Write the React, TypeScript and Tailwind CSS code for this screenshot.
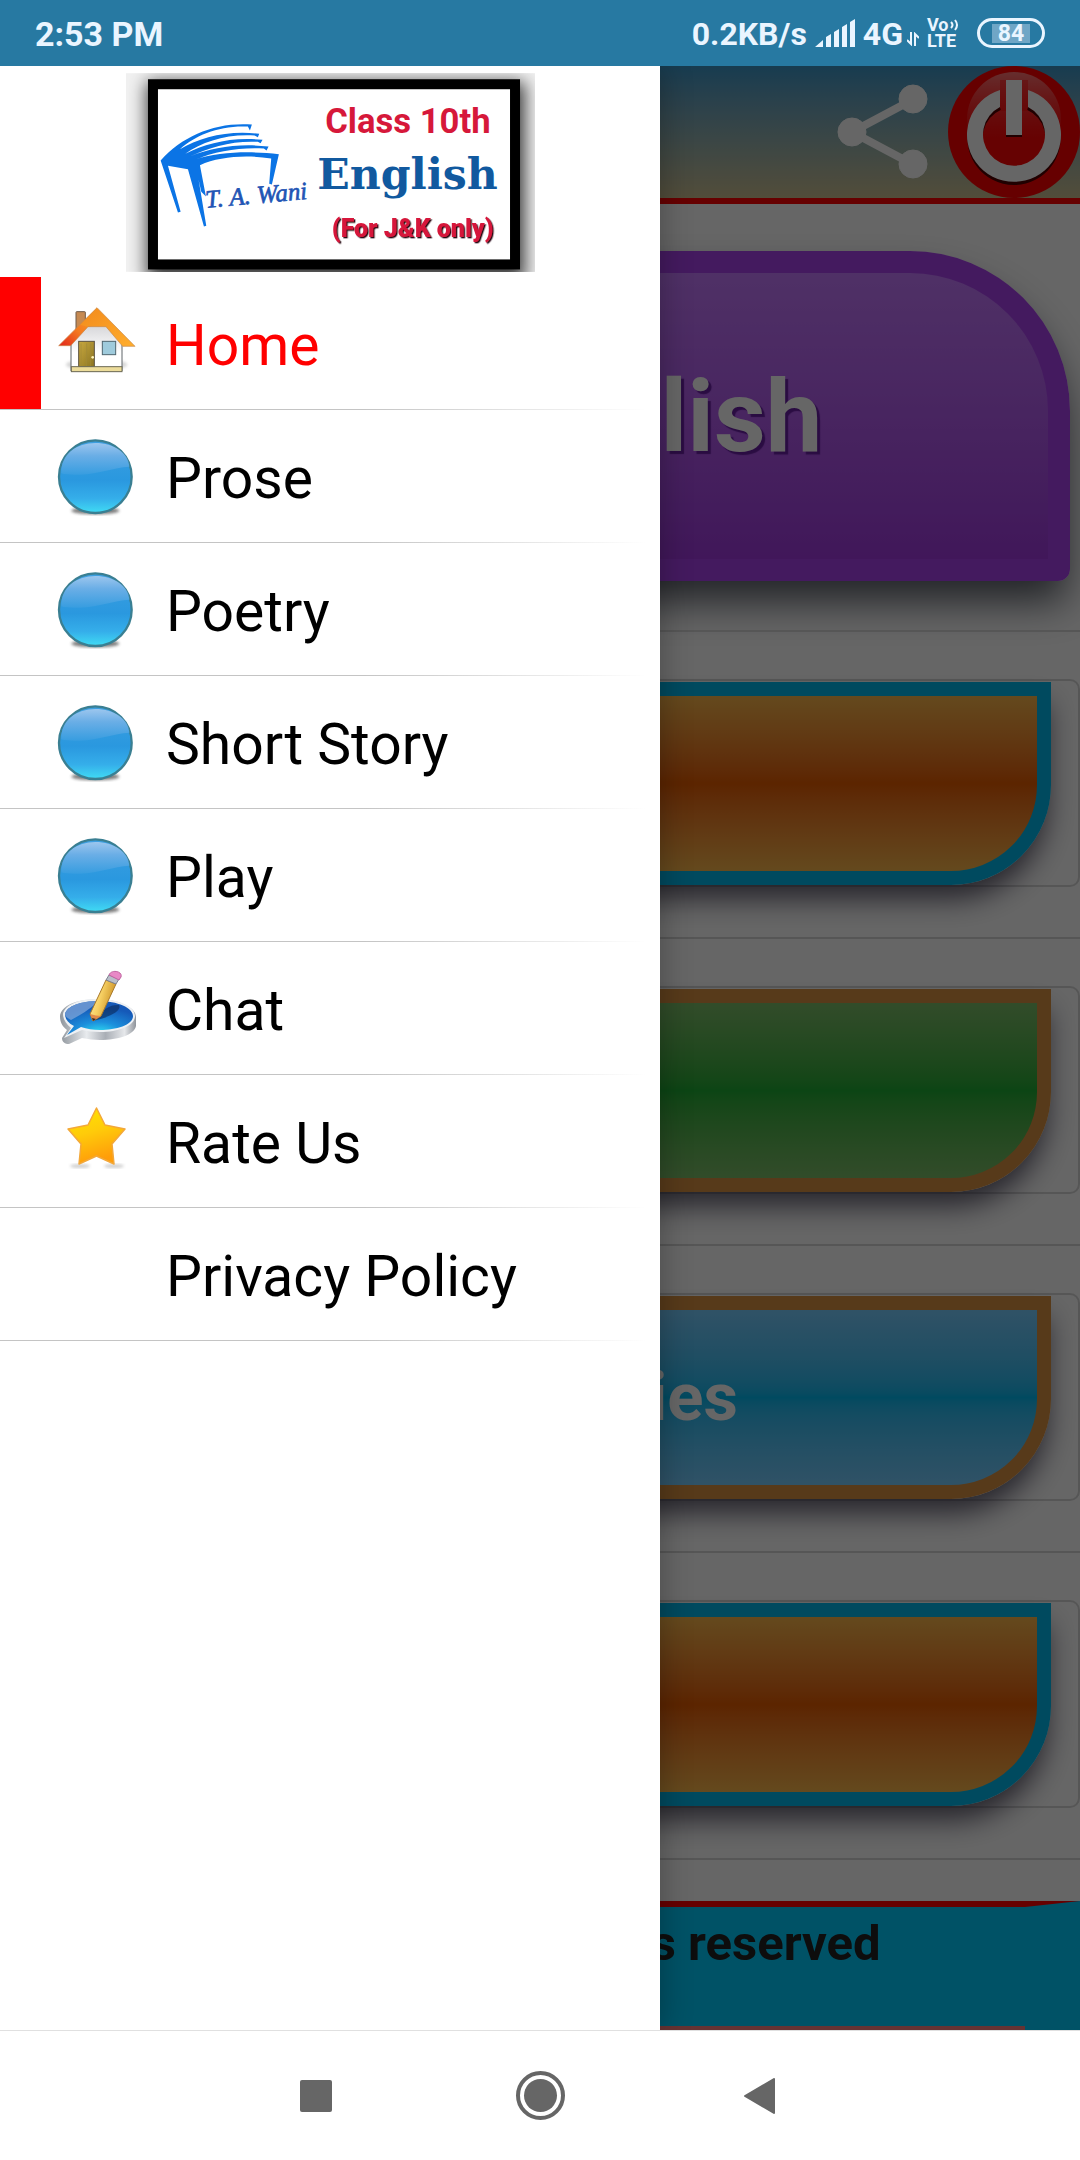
import type { ReactNode } from "react";

function HouseIcon() {
  return (
    <svg viewBox="168 99 240 240" className="size-20 shrink-0" aria-hidden="true">
      <defs>
        <linearGradient id="roof" x1="0" y1="1" x2="1" y2="0">
          <stop offset="0" stopColor="#e2231a" />
          <stop offset="0.45" stopColor="#f47b20" />
          <stop offset="1" stopColor="#fba52a" />
        </linearGradient>
        <linearGradient id="roofRight" x1="0" y1="0" x2="1" y2="1">
          <stop offset="0" stopColor="#f28a1c" />
          <stop offset="1" stopColor="#ffae2e" />
        </linearGradient>
        <linearGradient id="wall" x1="0" y1="0" x2="0" y2="1">
          <stop offset="0" stopColor="#d5d5d8" />
          <stop offset="0.6" stopColor="#ffffff" />
        </linearGradient>
        <linearGradient id="door" x1="0" y1="0" x2="1" y2="1">
          <stop offset="0" stopColor="#c9a93f" />
          <stop offset="1" stopColor="#8b7422" />
        </linearGradient>
        <filter id="houseBlur">
          <feGaussianBlur stdDeviation="5" />
        </filter>
      </defs>
      <ellipse cx="290" cy="284" rx="92" ry="18" fill="#9a9a9a" opacity="0.4" filter="url(#houseBlur)" />
      <rect x="228" y="125" width="28" height="60" rx="2" fill="#c68a52" stroke="#6f5a48" strokeWidth="3" />
      <path d="M213 200 L262 164 H318 L366 212 V303 H213Z" fill="url(#wall)" stroke="#5f6468" strokeWidth="3" />
      <path d="M291 113 L176 227 H212 L264 170 L291 166Z" fill="url(#roof)" />
      <path d="M291 113 L405 229 H368 L318 170 H264 L240 164Z" fill="url(#roofRight)" />
      <path d="M291 113 L176 227 H212 L264 170 H318 L368 229 H405Z" fill="none" stroke="#c98a4a" strokeWidth="2" />
      <rect x="236" y="214" width="47" height="77" fill="url(#door)" stroke="#5a5140" strokeWidth="3" />
      <path d="M243 220 V288 M260 220 V288 M272 220 V288" stroke="#a08a38" strokeWidth="2" />
      <circle cx="278" cy="262" r="4" fill="#fff3b8" />
      <rect x="307" y="214" width="40" height="40" fill="#9fcbdc" stroke="#4f6670" strokeWidth="3" />
      <rect x="214" y="290" width="152" height="15" fill="#ecdc9a" stroke="#6c6a55" strokeWidth="3" />
    </svg>
  );
}

function BallIcon() {
  return (
    <svg viewBox="168 498 240 240" className="size-20 shrink-0" aria-hidden="true">
      <defs>
        <linearGradient id="ball" x1="0" y1="0" x2="0" y2="1">
          <stop offset="0" stopColor="#3d9fe0" />
          <stop offset="0.55" stopColor="#2a98df" />
          <stop offset="0.8" stopColor="#35aeea" />
          <stop offset="1" stopColor="#40dcf4" />
        </linearGradient>
        <linearGradient id="gloss" x1="0" y1="0" x2="0" y2="1">
          <stop offset="0" stopColor="#9cc6ee" />
          <stop offset="0.4" stopColor="#6aaee6" />
          <stop offset="1" stopColor="#379de0" />
        </linearGradient>
        <filter id="ballBlur">
          <feGaussianBlur stdDeviation="4" />
        </filter>
      </defs>
      <ellipse cx="286" cy="722" rx="72" ry="11" fill="#444" opacity="0.7" filter="url(#ballBlur)" />
      <circle cx="286" cy="620" r="109" fill="url(#ball)" stroke="#3a7f92" strokeWidth="7" />
      <path
        d="M184 610 C182 552 230 519 286 519 C342 519 386 550 388 590 C340 592 300 612 240 614 C216 615 196 614 184 610Z"
        fill="url(#gloss)"
      />
    </svg>
  );
}

function ChatIcon() {
  return (
    <svg viewBox="0 0 80 80" className="size-20 shrink-0" aria-hidden="true">
      <defs>
        <radialGradient id="pool" cx="0.5" cy="0.95" r="0.75">
          <stop offset="0" stopColor="#2fe0f2" />
          <stop offset="0.45" stopColor="#1c8fdc" />
          <stop offset="1" stopColor="#1559b8" />
        </radialGradient>
        <linearGradient id="rim" x1="0" y1="0" x2="1" y2="0">
          <stop offset="0" stopColor="#8f959c" />
          <stop offset="0.35" stopColor="#e8ebee" />
          <stop offset="0.6" stopColor="#a9aeb5" />
          <stop offset="0.85" stopColor="#e6e8eb" />
          <stop offset="1" stopColor="#8f949b" />
        </linearGradient>
        <linearGradient id="pencil" x1="0" y1="0" x2="1" y2="0.4">
          <stop offset="0" stopColor="#fff0a8" />
          <stop offset="0.5" stopColor="#f6cf62" />
          <stop offset="1" stopColor="#c98e22" />
        </linearGradient>
      </defs>
      <path
        d="M4 48 C5 38 20 31 41 31 C62 31 80 39 80 49 V58 C78 67 62 72 44 72 C38 72 32 71 26 70 L13 76 C9 76 6 74 6 70 L11 62 C6 58 4 54 4 48Z"
        fill="url(#rim)"
      />
      <path
        d="M7 46 C9 37 22 31 42 31 C64 31 79 39 79 48 C79 58 62 64 44 64 C37 64 31 63 26 62 L8 70 L15 60 C10 56 7 51 7 46Z"
        fill="#eef1f4"
      />
      <path
        d="M9 46 C11 38 25 33 42 33 C62 33 77 40 77 48 C77 57 60 62 44 62 C37 62 31 61 25 59 L11 67 L18 58 C12 55 9 51 9 46Z"
        fill="url(#pool)"
      />
      <path d="M9 46 C11 38 25 33 42 33 C36 40 26 46 15 52 C11 50 9 48 9 46Z" fill="#7fa5d8" opacity="0.75" />
      <path d="M36 53 C46 42 54 36 63 37 C66 42 56 49 36 53Z" fill="#0a2c60" opacity="0.65" />
      <path d="M34 46 L50 12 L60 16 L45 48 L37 53Z" fill="url(#pencil)" stroke="#a9792a" strokeWidth="1" />
      <path d="M34 46 L37 53 L45 48 C42 48 38 47 34 46Z" fill="#e08a4a" />
      <path d="M36 50 L37 53 L40 51Z" fill="#3a2a20" />
      <path d="M50 12 L53 7 L63 11 L60 16Z" fill="#b9bec8" stroke="#7c8190" strokeWidth="1" />
      <path d="M53 7 C55 1 67 3 65 9 L63 12Z" fill="#e889c6" stroke="#c064a0" strokeWidth="1" />
    </svg>
  );
}

function StarIcon() {
  return (
    <svg viewBox="0 0 80 80" className="size-20 shrink-0" aria-hidden="true">
      <defs>
        <linearGradient id="star" x1="0" y1="0" x2="0.3" y2="1">
          <stop offset="0" stopColor="#ffe600" />
          <stop offset="0.5" stopColor="#ffcb0a" />
          <stop offset="1" stopColor="#ff9d0a" />
        </linearGradient>
        <filter id="starBlur">
          <feGaussianBlur stdDeviation="1.6" />
        </filter>
      </defs>
      <ellipse cx="24" cy="65" rx="10" ry="2" fill="#888" opacity="0.4" filter="url(#starBlur)" />
      <ellipse cx="58" cy="65" rx="10" ry="2" fill="#888" opacity="0.4" filter="url(#starBlur)" />
      <path
        d="M40.500 7 L49 24 L69 28 L56 43 L58 63 L40.500 55 L23 63 L25 43 L12 28 L32 24Z"
        fill="url(#star)"
        stroke="#f3a83a"
        strokeWidth="1.500"
        strokeLinejoin="round"
      />
    </svg>
  );
}

function Logo() {
  return (
    <svg viewBox="50 40 1228 596" className="h-[199px] w-[409px]" role="img" aria-label="Class 10th English logo">
      <defs>
        <filter id="frameBlur" x="-0.1" y="-0.2" width="1.2" height="1.4">
          <feGaussianBlur stdDeviation="26" />
        </filter>
        <filter id="textShade">
          <feDropShadow dx="4" dy="4" stdDeviation="1" floodColor="#2a0a18" />
        </filter>
      </defs>
      <rect x="50" y="40" width="1228" height="596" fill="#f0f0f0" />
      <rect x="112" y="66" width="1136" height="600" fill="#000" opacity="0.75" filter="url(#frameBlur)" />
      <rect x="116" y="58" width="1117" height="571" fill="#000" />
      <rect x="146" y="88" width="1057" height="511" fill="#fff" />
      <path
        d="M154 302 C222 226 320 186 428 194 L422 212 L416 200 C330 196 258 226 212 268 C272 232 360 210 450 222 L446 232 L436 227 C350 222 280 246 228 282 C290 250 370 230 460 240 L454 250 L446 246 C370 242 300 262 242 290 C310 262 390 250 478 260 L472 272 L464 266 C390 262 320 274 256 300 C330 274 430 274 509 283 L488 374 L480 372 L486 296 C410 284 330 290 272 316 L290 410 L276 396 L268 360 L291 498 L284 500 L236 328 L176 318 L214 456 L206 458Z"
        fill="#0b74e5"
      />
      <text
        x="290"
        y="444"
        fontFamily="'Liberation Serif', serif"
        fontSize="75"
        fontStyle="italic"
        fill="#1f55b5"
        stroke="#1f55b5"
        strokeWidth="2"
        transform="rotate(-5 290 444)"
      >
        T. A. Wani
      </text>
      <text x="648" y="218" fontFamily="Roboto, sans-serif" fontSize="104" fontWeight="700" fill="#d6183a">
        Class 10th
      </text>
      <text x="624" y="388" fontFamily="'DejaVu Serif', serif" fontSize="128" fontWeight="700" fill="#11599f">
        English
      </text>
      <text
        x="668"
        y="533"
        fontFamily="Roboto, sans-serif"
        fontSize="75"
        fontWeight="900"
        fill="#d6183a"
        filter="url(#textShade)"
      >
        (For J&amp;K only)
      </text>
    </svg>
  );
}

const menu: { label: string; icon?: ReactNode; active?: boolean }[] = [
  { label: "Home", icon: <HouseIcon />, active: true },
  { label: "Prose", icon: <BallIcon /> },
  { label: "Poetry", icon: <BallIcon /> },
  { label: "Short Story", icon: <BallIcon /> },
  { label: "Play", icon: <BallIcon /> },
  { label: "Chat", icon: <ChatIcon /> },
  { label: "Rate Us", icon: <StarIcon /> },
  { label: "Privacy Policy" },
];

const cards = [
  { label: "Prose", style: "border-[#00b9ee] from-[#fab74b] via-[#e65c00] to-[#fab74b]" },
  { label: "Poetry", style: "border-[#da9141] from-[#7dbe69] via-[#1eac34] to-[#7dbe69]" },
  { label: "Short Stories", style: "border-[#da9141] from-[#78cdff] via-[#00b9f0] to-[#78cdff]" },
  { label: "Play", style: "border-[#00b9ee] from-[#fab74b] via-[#e65c00] to-[#fab74b]" },
];

function StatusBar() {
  return (
    <div className="flex h-[66px] items-center bg-[#2779a2] px-[35px] text-[#eaf5ff]">
      <span className="pt-0.5 text-[34px] leading-none font-bold">2:53 PM</span>
      <div className="ml-auto flex items-center">
        <span className="pt-0.5 text-[32px] leading-none font-bold">0.2KB/s</span>
        <svg viewBox="0 0 40 30" className="ml-2 h-[30px] w-10" fill="currentColor" aria-label="Signal">
          <path d="M0 29 L8 22 V29Z M11 19 L16 16 V29 H11Z M19 14 L24 11 V29 H19Z M27 9 L32 6 V29 H27Z M35 4 L40 1 V29 H35Z" />
        </svg>
        <span className="ml-2 pt-0.5 text-[32px] leading-none font-bold">4G</span>
        <svg viewBox="0 0 12 14" className="mt-3 ml-1 h-[14px] w-3" fill="none" stroke="currentColor" strokeWidth="2" aria-label="Data">
          <path d="M4 0 V12 L0 8 M8 14 V2 L12 6" />
        </svg>
        <div className="ml-2 flex w-[35px] flex-col text-[18px] leading-4 font-bold">
          <span className="flex items-center">
            Vo
            <svg viewBox="0 0 10 14" className="h-[14px] w-[10px]" fill="none" stroke="currentColor" strokeWidth="2" aria-hidden="true">
              <path d="M2 4 Q5 7 2 10 M6 2 Q10 7 6 12" />
            </svg>
          </span>
          <span>LTE</span>
        </div>
        <div className="ml-[15px] flex h-[30px] w-[68px] items-center justify-center rounded-full border-3 border-[#eaf5ff] px-3">
          <span className="w-full bg-[#6fa6c6] text-center text-[23px] leading-[19px] font-bold">84</span>
        </div>
      </div>
    </div>
  );
}

function Header() {
  return (
    <header className="flex h-[138px] items-center justify-end border-b-6 border-[#ff0000] bg-linear-to-b from-[#3a96c8] to-[#cdc091]">
      <button type="button" aria-label="Share" className="mr-[18px]">
        <svg viewBox="0 0 96 96" className="size-24" fill="#ffffff" stroke="#ffffff">
          <path d="M80 15 L18 48 L80 81" fill="none" strokeWidth="8" />
          <circle cx="18" cy="48" r="14" />
          <circle cx="79" cy="15" r="14" />
          <circle cx="79" cy="80" r="14" />
        </svg>
      </button>
      <button type="button" aria-label="Exit">
        <svg viewBox="0 0 132 132" className="size-[132px]">
          <defs>
            <linearGradient id="shine" x1="0" y1="0" x2="0" y2="1">
              <stop offset="0" stopColor="#ff9c9c" stopOpacity="0.75" />
              <stop offset="0.7" stopColor="#ff4040" stopOpacity="0.1" />
            </linearGradient>
          </defs>
          <circle cx="66" cy="66" r="66" fill="#ff0000" />
          <circle cx="66" cy="53" r="47" fill="url(#shine)" />
          <path d="M50 31 A39 39 0 1 0 82 31" transform="translate(0 6)" fill="none" stroke="#500000" strokeWidth="15" />
          <path d="M66 14 H52 V45 H80 V14Z" fill="#ff0000" opacity="0.4" />
          <path d="M52 24 A47 47 0 1 0 80 24 V41 A31 31 0 1 1 52 41Z" fill="#fff" />
          <path d="M58 69 H74 V71 H58Z" fill="#500000" />
          <rect x="58" y="14" width="16" height="55" fill="#fff" />
        </svg>
      </button>
    </header>
  );
}

function Page() {
  return (
    <div className="flex flex-1 flex-col bg-white">
      <Header />
      <section className="px-[10px] pt-[47px] pb-[49px]">
        <h1 className="flex h-[330px] items-center justify-center rounded-t-[160px] rounded-b-xl border-22 border-[#ab43ee] bg-linear-to-b from-[#c67aff] to-[#a23ae0] text-[101px] leading-none font-bold text-white shadow-[0_24px_40px_-4px_rgba(10,15,30,0.7)] text-shadow-[3px_3px_1px_#6a20a5]">
          10th English
        </h1>
      </section>
      {cards.map((card, i) => (
        <section key={i} className="border-t-2 border-[#d8d8d8] pt-[47px] pb-[50px]">
          <div className="rounded-[10px] border-2 border-[#d8d8d8] px-[27px] pt-px">
            <a
              href="#"
              className={`flex h-[203px] items-center justify-center rounded-b-[100px] border-14 bg-linear-to-b text-[67px] font-bold text-white shadow-[0_18px_28px_-4px_rgba(10,5,30,0.65)] ${card.style}`}
            >
              {card.label}
            </a>
          </div>
        </section>
      ))}
      <div className="h-[43px] border-t-2 border-[#d8d8d8]" />
      <footer className="flex flex-1 flex-col bg-[#00ccff]">
        <p className="flex-1 border-x-55 border-t-6 border-x-[#00ccff] border-t-[#ff0000] pt-2 text-center text-[49px] leading-[58px] font-bold text-[#222222]">
          Copyright © All rights reserved
        </p>
        <div className="mx-[55px] h-1 bg-[#ff8080]" />
      </footer>
    </div>
  );
}

function Drawer() {
  return (
    <aside className="absolute inset-y-0 left-0 w-[660px] bg-white shadow-[0_0_30px_rgba(0,0,0,0.3)]">
      <div className="flex justify-center pt-[7px] pb-[5px]">
        <Logo />
      </div>
      <nav>
        <ul>
          {menu.map((item) => (
            <li key={item.label}>
              <a href="#" className={`flex h-[132px] items-center text-[57px] ${item.active ? "text-[#ff0000]" : "text-black"}`}>
                <span className={`mr-[15px] h-full w-[41px] shrink-0 ${item.active ? "bg-[#ff0000]" : ""}`} />
                {item.icon ?? <span className="size-20 shrink-0" />}
                <span className="ml-[30px] pt-1.5">{item.label}</span>
              </a>
              <div className="h-px bg-linear-to-r from-[#c4c4c4] from-55% to-white to-98%" />
            </li>
          ))}
        </ul>
      </nav>
    </aside>
  );
}

function NavigationBar() {
  return (
    <div className="flex h-[130px] items-center justify-center gap-[168px] border-t border-[#e0e0e0] bg-white">
      <button type="button" aria-label="Recent apps" className="flex w-14 justify-center">
        <span className="size-8 rounded-xs bg-[#666]" />
      </button>
      <button type="button" aria-label="Home screen" className="flex w-14 justify-center">
        <span className="size-[49px] rounded-full border-4 border-[#666] p-1">
          <span className="block size-full rounded-full bg-[#666]" />
        </span>
      </button>
      <button type="button" aria-label="Back" className="flex w-14 justify-start pl-2">
        <svg viewBox="0 0 32 36" className="h-9 w-8" fill="#666" stroke="#666" strokeWidth="2" strokeLinejoin="round">
          <path d="M1 18 L30 1 V35Z" />
        </svg>
      </button>
    </div>
  );
}

export default function App() {
  return (
    <div className="flex min-h-screen flex-col overflow-hidden bg-white font-['Roboto',sans-serif]">
      <StatusBar />
      <main className="relative flex flex-1 flex-col overflow-hidden">
        <Page />
        <div className="absolute inset-0 bg-black/60" />
        <Drawer />
      </main>
      <NavigationBar />
    </div>
  );
}
